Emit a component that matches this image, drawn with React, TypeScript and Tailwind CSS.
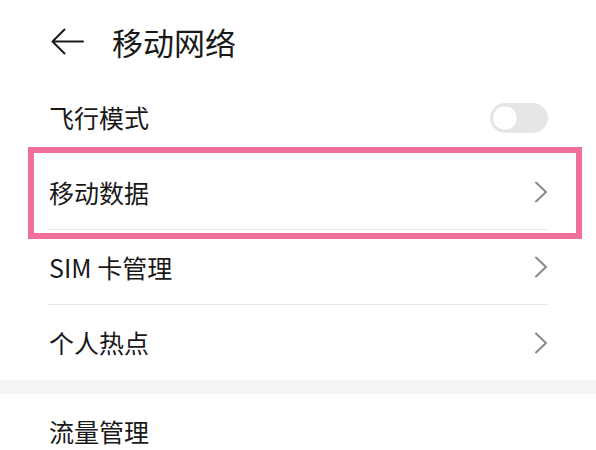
import React from 'react'

const font = { fontFamily: '"Noto Sans CJK SC", "Noto Sans", sans-serif' }

function Chevron() {
  return (
    <svg width="14" height="22" viewBox="0 0 14 22" fill="none" className="shrink-0">
      <path d="M2 1.5 L12 11 L2 20.5" stroke="#8a8a8a" strokeWidth="2" strokeLinecap="round" strokeLinejoin="round" />
    </svg>
  )
}

function Toggle() {
  return (
    <div className="w-[58px] h-[30px] rounded-full bg-[#e6e6e6] flex items-center px-[2px] shrink-0">
      <div className="w-[26px] h-[26px] rounded-full bg-white border border-[#dcdcdc]" />
    </div>
  )
}

function Row({ label, right, divider = true }: { label: string; right?: React.ReactNode; divider?: boolean }) {
  return (
    <div className="px-12">
      <div className={`h-[75px] flex items-center justify-between ${divider ? 'border-b border-[#e8e8e8]' : ''}`}>
        <span className="text-[25px] leading-none text-[#191919] pl-[1px]">{label}</span>
        {right}
      </div>
    </div>
  )
}

export default function App() {
  return (
    <div className="relative w-[596px] h-[450px] bg-white overflow-hidden" style={font}>
      {/* Header */}
      <div className="h-[80px] flex items-center pl-[51px] pt-[2px]">
        <svg width="33" height="27" viewBox="0 0 33 27" fill="none" className="shrink-0">
          <path d="M13.5 1.5 L1.5 13.5 L13.5 25.5 M1.5 13.5 H32" stroke="#1a1a1a" strokeWidth="2" strokeLinecap="round" strokeLinejoin="round" />
        </svg>
        <h1 className="ml-[28px] text-[31px] leading-none font-normal text-[#191919]">移动网络</h1>
      </div>

      {/* Settings list */}
      <Row label="飞行模式" right={<Toggle />} divider={false} />
      <Row label="移动数据" right={<Chevron />} />
      <Row label="SIM 卡管理" right={<Chevron />} />
      <Row label="个人热点" right={<Chevron />} divider={false} />

      <div className="h-[14px] bg-[#f4f4f4]" />

      <Row label="流量管理" divider={false} />

      {/* Highlight annotation */}
      <div className="absolute left-[28px] top-[147px] w-[554px] h-[92px] border-[6px] border-[#f0709a] pointer-events-none" />
    </div>
  )
}
